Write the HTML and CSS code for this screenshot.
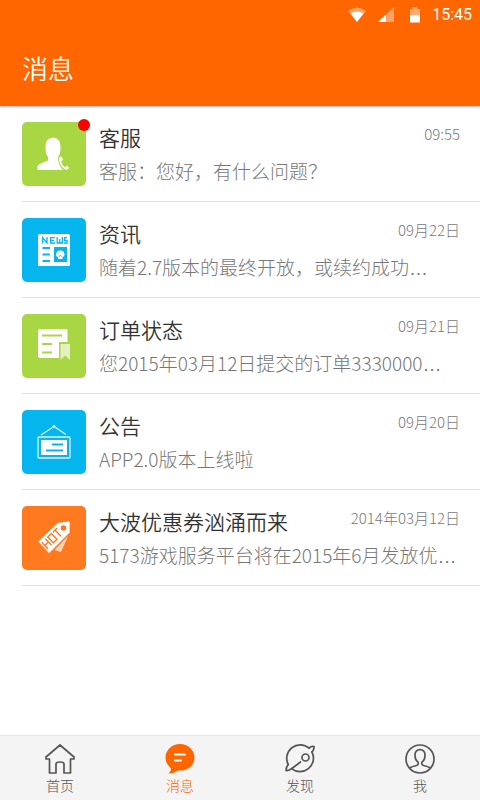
FILE: index.html
```html
<!DOCTYPE html>
<html lang="zh-CN">
<head>
<meta charset="utf-8">
<meta name="viewport" content="width=device-width, initial-scale=1">
<title>消息</title>
<link rel="stylesheet" href="styles.css">
</head>
<body>
<header class="header">
  <div class="status">
    <svg class="status-wifi" width="18" height="16" viewBox="0 0 18 16" aria-hidden="true"><path d="M0 4Q9-3 18 4L9 15Z" fill="#fff" opacity=".4"/><path d="M2.500 6.500Q9 2.500 15.500 6.500L9 15Z" fill="#fff"/></svg>
    <svg class="status-signal" width="16" height="16" viewBox="0 0 16 16" aria-hidden="true"><path d="M0 15L16 0V15Z" fill="#fff" opacity=".4"/><path d="M0 15L8 7.500V15Z" fill="#fff"/></svg>
    <svg class="status-battery" width="10" height="16" viewBox="0 0 10 16" aria-hidden="true"><path d="M0 2H2.500V0H7.500V2H10V8H0Z" fill="#fff" opacity=".45"/><path d="M0 8H10V15.500H0Z" fill="#fff"/></svg>
    <time class="clock">15:45</time>
  </div>
  <h1 class="page-title">消息</h1>
</header>

<main class="content">
  <ul class="messages">
    <li class="message">
      <span class="tile tile-green">
        <svg width="64" height="64" viewBox="0 0 64 64" aria-hidden="true"><path d="M15.500 48V44Q17 41.500 26 38.500V35Q23.500 32 23.500 27Q22.800 16 31 15.500Q39.200 16 38.500 27Q38.500 32 36 35Q35.500 39.500 39 46L41 48Z" fill="#fff"/><path d="M37 35.500L39 34L41.500 37.500L39.500 39.500Q40 43 43 45L45 43.500L47.500 46L45 48Q41 48 38.500 43Q36 38.500 37 35.500Z" fill="#fff" stroke="#a9d744" stroke-width=".5"/></svg>
        <span class="badge"></span>
      </span>
      <div class="body"><div class="line"><h2 class="name">客服</h2><time class="date">09:55</time></div><p class="text">客服：您好，有什么问题？</p></div>
    </li>
    <li class="message">
      <span class="tile tile-blue">
        <svg width="64" height="64" viewBox="0 0 64 64" aria-hidden="true"><rect x="16" y="16" width="32" height="32" rx="1.500" fill="#fff"/><g fill="none" stroke="#05b6ee" stroke-width="1.300"><path d="M20.600 25.500V19.500L25 25V19M33 19.600H28.600V25H33M28.600 22.300H32M35.200 19V25H40.400V19M37.800 21V25M45 19.600H42.600V22.300H45V25H42"/><path d="M20.500 30H28M20.500 36.500H28M20.500 43H28" stroke-width="2"/></g><path d="M32 29H45V44H32Z" fill="#05b6ee"/><path d="M34 37Q34 32.500 38.300 32.500T42.500 37Q42 39 40.500 39V41H36V39Q34 39 34 37Z" fill="#fff"/><path d="M37 38.500L38.300 37.500L39.500 38.500" fill="none" stroke="#05b6ee"/></svg>
      </span>
      <div class="body"><div class="line"><h2 class="name">资讯</h2><time class="date">09月22日</time></div><p class="text">随着2.7版本的最终开放，或续约成功<span class="more">…</span></p></div>
    </li>
    <li class="message">
      <span class="tile tile-green">
        <svg width="64" height="64" viewBox="0 0 64 64" aria-hidden="true"><path d="M18 15H44Q45.500 15 45.500 16.500V28H37V44H18Q16 44 16 42V17Q16 15 18 15Z" fill="#fff"/><path d="M20 21.500H40M20 30H30M20 38.500H30" stroke="#a9d744" stroke-width="2"/><path d="M38.500 30H48V46L43.300 41.500L38.500 46Z" fill="#e3f2bd"/></svg>
      </span>
      <div class="body"><div class="line"><h2 class="name">订单状态</h2><time class="date">09月21日</time></div><p class="text">您2015年03月12日提交的订单3330000<span class="more">…</span></p></div>
    </li>
    <li class="message">
      <span class="tile tile-blue">
        <svg width="64" height="64" viewBox="0 0 64 64" aria-hidden="true"><g fill="none" stroke="#d8f4fd" stroke-width="1.300"><path d="M19 25L30.500 17.500M33.500 17.500L44 24.500"/><rect x="16" y="27" width="32" height="21" rx="1"/></g><circle cx="32" cy="16.500" r="1.500" fill="#fff"/><path d="M19 30H45V45H19Z" fill="#fff"/><path d="M30 34.500H41M24 40.500H41" stroke="#05b6ee" stroke-width="2"/></svg>
      </span>
      <div class="body"><div class="line"><h2 class="name">公告</h2><time class="date">09月20日</time></div><p class="text">APP2.0版本上线啦</p></div>
    </li>
    <li class="message">
      <span class="tile tile-orange">
        <svg width="64" height="64" viewBox="0 0 64 64" aria-hidden="true"><path d="M46 30L39 46L32.500 44Z" fill="#ffd2b0"/><path d="M16 35.500L36 16.500L48 15V26.500L27 47.500Z" fill="#fff" stroke="#ff791f" stroke-width=".7"/><circle cx="41.500" cy="22" r="2.800" fill="#ff791f"/><g transform="translate(30 32.500) rotate(-44)" fill="none" stroke="#ff791f" stroke-width="1.400"><path d="M-10-4.500V4.500M-5-4.500V4.500M-10 0H-5M-2-4H3V4H-2ZM5-4H11M8-4V4.500"/></g></svg>
      </span>
      <div class="body"><div class="line"><h2 class="name">大波优惠券汹涌而来</h2><time class="date">2014年03月12日</time></div><p class="text">5173游戏服务平台将在2015年6月发放优<span class="more">…</span></p></div>
    </li>
  </ul>
</main>

<nav class="tabs" aria-label="主导航">
  <a class="tab" href="#home">
    <svg width="32" height="32" viewBox="0 0 32 32" aria-hidden="true"><path d="M16 2L30 14V16H26.500V30H20V21Q20 19 16 19T12 21V30H5.500V16H2V14Z"/></svg>
    <span>首页</span>
  </a>
  <a class="tab tab-active" href="#messages" aria-current="page">
    <svg width="32" height="32" viewBox="0 0 32 32" aria-hidden="true"><path class="bubble" d="M16 1C24 1 30.500 7 30.500 14.500C30.500 23 23 28.500 14 27.500Q10 30.500 4.500 30.500Q7 28.500 7 25.500Q1.500 21 1.500 14.500C1.500 7 8 1 16 1Z"/><path class="bubble-lines" d="M11 11.500H21M11 17.500H17"/></svg>
    <span>消息</span>
  </a>
  <a class="tab" href="#discover">
    <svg width="32" height="32" viewBox="0 0 32 32" aria-hidden="true"><path d="M25 5.100A13.500 13.500 0 0 0 4.200 21.500M7.500 25.700A13.500 13.500 0 0 0 28 9.100"/><path d="M25 5.100Q27 3 30 3.500Q30.500 6 28 9.100M4.200 21.500Q2 24 2 27.500Q5 28 7.500 25.700L16.500 19"/><circle cx="21.500" cy="14.500" r="3.500"/></svg>
    <span>发现</span>
  </a>
  <a class="tab" href="#me">
    <svg width="32" height="32" viewBox="0 0 32 32" aria-hidden="true"><circle cx="16" cy="16" r="14"/><path d="M5.500 25Q8 23.500 12.500 22.500Q15 21.500 14 19Q11 17 11 12Q11 7 16 6.500Q21 7 21 12Q21 17 18 19Q17 21.500 19.500 22.500Q24 23.500 26.500 25"/></svg>
    <span>我</span>
  </a>
</nav>
</body>
</html>
```

FILE: styles.css
```css
* {
  box-sizing: border-box;
}

body {
  margin: 0;
  min-height: 100vh;
  display: flex;
  flex-direction: column;
  background: #fff;
  color: #333;
  font-family: "Noto Sans CJK SC", sans-serif;
  font-weight: 350;
}

h1, h2, p, ul {
  margin: 0;
  padding: 0;
  font-weight: inherit;
}

.header {
  background: #ff6600;
  color: #fff;
  padding-bottom: 18px;
  box-shadow: 0 1px 2px rgba(0, 0, 0, 0.3);
}

.status {
  display: flex;
  justify-content: flex-end;
  align-items: center;
  height: 30px;
  padding-right: 8px;
}

.status-signal {
  margin-left: 12px;
}

.status-battery {
  margin-left: 16px;
}

.clock {
  margin-left: 12px;
  font: 400 16px/30px Roboto, sans-serif;
}

.page-title {
  padding: 0 22px;
  margin-top: 18px;
  font-size: 26px;
  line-height: 40px;
}

.content {
  flex: 1;
}

.messages {
  list-style: none;
  padding-left: 22px;
}

.message {
  display: flex;
  gap: 13px;
  padding: 16px 20px 12px 0;
  border-bottom: 1px solid #e0e0e0;
}

.tile {
  position: relative;
  flex: none;
  width: 64px;
  height: 64px;
  border-radius: 5px;
}

.tile svg {
  display: block;
}

.tile-green {
  background: #a9d744;
}

.tile-blue {
  background: #05b6ee;
}

.tile-orange {
  background: #ff791f;
}

.badge {
  position: absolute;
  top: -3px;
  right: -4px;
  width: 12px;
  height: 12px;
  border-radius: 50%;
  background: #f00;
}

.body {
  flex: 1;
  min-width: 0;
}

.line {
  display: flex;
  justify-content: space-between;
}

.name {
  font-size: 21px;
  line-height: 30px;
}

.date {
  color: #777;
  font-size: 15px;
  font-weight: 300;
  line-height: 23px;
}

.text {
  color: #777;
  font-size: 19px;
  font-weight: 300;
  line-height: 37px;
  white-space: nowrap;
}

.more {
  font-family: "Liberation Sans", sans-serif;
  line-height: 1;
}

.tabs {
  display: flex;
  background: #f4f4f4;
  border-top: 1px solid #e4e4e4;
}

.tab {
  flex: 1;
  display: flex;
  flex-direction: column;
  align-items: center;
  padding: 7px 0 4px;
  color: #555;
  font-size: 14px;
  font-weight: 300;
  line-height: 21px;
  text-decoration: none;
}

.tab svg {
  fill: none;
  stroke: #555;
  stroke-width: 1.7;
  stroke-linejoin: round;
  stroke-linecap: round;
}

.tab-active {
  color: #ff6600;
}

.tab .bubble {
  fill: #ff6600;
  stroke: none;
}

.tab .bubble-lines {
  stroke: #fff;
  stroke-width: 2;
}
```
